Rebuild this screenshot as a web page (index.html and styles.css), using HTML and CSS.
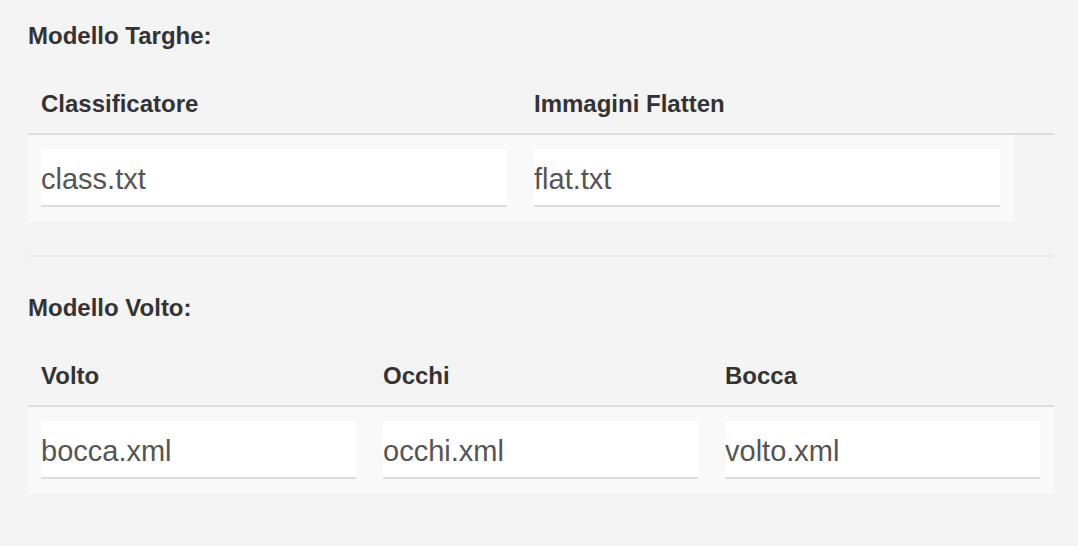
FILE: index.html
```html
<!DOCTYPE html>
<html lang="it">
<head>
<meta charset="utf-8">
<title>Modelli</title>
<link rel="stylesheet" href="styles.css">
</head>
<body>
<div class="page">
  <section class="section">
    <h2 class="section-title">Modello Targhe:</h2>
    <div class="table table-two">
      <div class="thead">
        <div class="th">Classificatore</div>
        <div class="th">Immagini Flatten</div>
        <div class="th"></div>
      </div>
      <div class="trow">
        <div class="td"><input class="field" type="text" value="class.txt"></div>
        <div class="td"><input class="field" type="text" value="flat.txt"></div>
      </div>
    </div>
  </section>
  <hr class="divider">
  <section class="section">
    <h2 class="section-title">Modello Volto:</h2>
    <div class="table table-three">
      <div class="thead">
        <div class="th">Volto</div>
        <div class="th">Occhi</div>
        <div class="th">Bocca</div>
      </div>
      <div class="trow">
        <div class="td"><input class="field" type="text" value="bocca.xml"></div>
        <div class="td"><input class="field" type="text" value="occhi.xml"></div>
        <div class="td"><input class="field" type="text" value="volto.xml"></div>
      </div>
    </div>
  </section>
</div>
</body>
</html>
```

FILE: styles.css
```css
html, body {
  margin: 0;
  padding: 0;
  background: #f4f4f4;
}

body {
  font-family: "Liberation Sans", Arial, Helvetica, sans-serif;
  color: #333333;
}

.page {
  width: 1026px;
  padding: 20px 24px 0 28px;
}

.section-title {
  margin: 0;
  font-size: 24px;
  line-height: 32px;
  font-weight: bold;
  color: #333333;
}

.table {
  margin-top: 22px;
}

.thead {
  display: grid;
  border-bottom: 2px solid #dddddd;
}

.table-two .thead {
  grid-template-columns: 493px 493px 1fr;
}

.table-three .thead {
  grid-template-columns: 342px 342px 342px;
}

.th {
  padding: 15px 14px 14px 13px;
  font-size: 24px;
  line-height: 30px;
  font-weight: bold;
  color: #333333;
}

.trow {
  display: grid;
  background: #f9f9f9;
}

.table-two .trow {
  grid-template-columns: 493px 493px;
  width: 986px;
}

.table-three .trow {
  grid-template-columns: 342px 342px 342px;
}

.td {
  padding: 14px 14px 14px 13px;
}

.field {
  display: block;
  box-sizing: border-box;
  width: 100%;
  height: 58px;
  margin: 0;
  padding: 4px 0 0 0;
  border: 0;
  border-bottom: 2px solid #dddddd;
  border-radius: 0;
  background: #ffffff;
  font-family: "Liberation Sans", Arial, Helvetica, sans-serif;
  font-size: 29px;
  color: #555555;
  outline: none;
}

.divider {
  margin: 34px 0 35px 0;
  height: 2px;
  border: 0;
  background: #ebebeb;
}
```
